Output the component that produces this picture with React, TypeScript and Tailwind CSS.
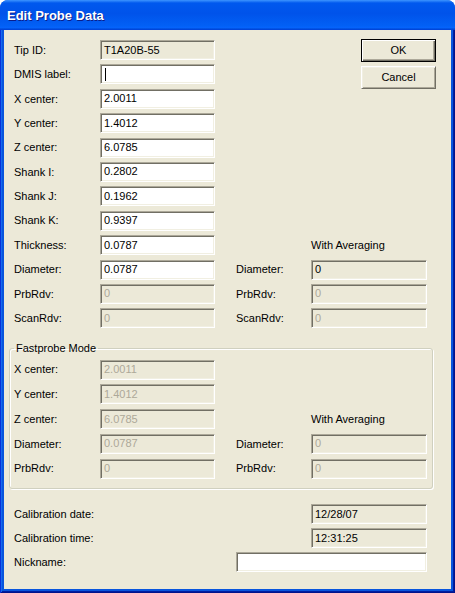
import React from "react";

type Variant = "edit" | "ro" | "dis";

const fieldBase =
  "h-[20px] flex items-center pl-[3px] text-[11px] leading-none border border-t-[#ACA899] border-l-[#ACA899] border-b-white border-r-white shadow-[inset_1px_1px_0_#716F64,inset_-1px_-1px_0_#F1EFE2] whitespace-nowrap overflow-hidden";

function Field({
  value = "",
  variant,
  className = "w-[115px]",
  cursor = false,
}: {
  value?: string;
  variant: Variant;
  className?: string;
  cursor?: boolean;
}) {
  const v =
    variant === "edit"
      ? "bg-white text-black"
      : variant === "ro"
      ? "bg-[#ECE9D8] text-black"
      : "bg-[#ECE9D8] text-[#ACA899]";
  return (
    <div className={`${fieldBase} ${v} ${className}`}>
      {cursor ? <span className="block w-px h-[13px] bg-black ml-[1px]" /> : value}
    </div>
  );
}

function Label({ text, className = "w-[86px]" }: { text: string; className?: string }) {
  return (
    <div className={`h-[20px] flex items-center text-[11px] text-black whitespace-nowrap ${className}`}>
      {text}
    </div>
  );
}

function Button({ text, isDefault = false, className = "" }: { text: string; isDefault?: boolean; className?: string }) {
  const border = isDefault
    ? "border border-black shadow-[inset_1px_1px_0_#FFFFFF,inset_-1px_-1px_0_#716F64,inset_-2px_-2px_0_#ACA899]"
    : "border border-t-white border-l-white border-b-[#716F64] border-r-[#716F64] shadow-[inset_1px_1px_0_#F1EFE2,inset_-1px_-1px_0_#ACA899]";
  return (
    <div
      className={`w-[75px] h-[23px] flex items-center justify-center bg-[#ECE9D8] text-[11px] text-black ${border} ${className}`}
    >
      {text}
    </div>
  );
}

export default function App() {
  return (
    <div className="w-[455px] h-[593px] flex flex-col rounded-t-[8px] overflow-hidden font-['Liberation_Sans',Arial,sans-serif] bg-[#0855DD]">
      {/* Title bar */}
      <div className="h-[30px] shrink-0 flex items-center pl-[7px] pt-[1px] bg-[linear-gradient(180deg,#3d95ff,#0058ee_10%,#0053ea_45%,#0260f5_85%,#0563fb_92%,#0050e0_96%,#003dd7)]">
        <span className="text-white font-bold text-[13px] [text-shadow:1px_1px_0_#0a1e8a]">Edit Probe Data</span>
      </div>
      {/* Frame + body */}
      <div className="flex-1 flex px-[4px] pb-[4px] bg-[#0855DD] shadow-[inset_1px_0_0_#0831D9,inset_-1px_0_0_#00138C,inset_0_-1px_0_#00138C,inset_2px_0_0_#166AEE,inset_-2px_0_0_#001EA0,inset_0_-2px_0_#001EA0]">
        <div className="flex-1 bg-[#ECE9D8] pl-[10px] pt-[10px] flex flex-col">
          {/* Top rows */}
          <div className="flex flex-col">
            <div className="flex h-[24.4px]">
              <Label text="Tip ID:" />
              <Field variant="ro" value="T1A20B-55" />
              <Button text="OK" isDefault className="ml-[146px] -mt-[1px]" />
            </div>
            <div className="flex h-[24.4px]">
              <Label text="DMIS label:" />
              <Field variant="edit" cursor />
              <Button text="Cancel" className="ml-[146px] mt-[1.6px]" />
            </div>
            <div className="flex h-[24.4px]">
              <Label text="X center:" />
              <Field variant="edit" value="2.0011" />
            </div>
            <div className="flex h-[24.4px]">
              <Label text="Y center:" />
              <Field variant="edit" value="1.4012" />
            </div>
            <div className="flex h-[24.4px]">
              <Label text="Z center:" />
              <Field variant="edit" value="6.0785" />
            </div>
            <div className="flex h-[24.4px]">
              <Label text="Shank I:" />
              <Field variant="edit" value="0.2802" />
            </div>
            <div className="flex h-[24.4px]">
              <Label text="Shank J:" />
              <Field variant="edit" value="0.1962" />
            </div>
            <div className="flex h-[24.4px]">
              <Label text="Shank K:" />
              <Field variant="edit" value="0.9397" />
            </div>
            <div className="flex h-[24.4px]">
              <Label text="Thickness:" />
              <Field variant="edit" value="0.0787" />
              <Label text="With Averaging" className="ml-[96px]" />
            </div>
            <div className="flex h-[24.4px]">
              <Label text="Diameter:" />
              <Field variant="edit" value="0.0787" />
              <Label text="Diameter:" className="ml-[21px] w-[75px]" />
              <Field variant="ro" value="0" className="w-[116px]" />
            </div>
            <div className="flex h-[24.4px]">
              <Label text="PrbRdv:" />
              <Field variant="dis" value="0" />
              <Label text="PrbRdv:" className="ml-[21px] w-[75px]" />
              <Field variant="dis" value="0" className="w-[116px]" />
            </div>
            <div className="flex h-[24.4px]">
              <Label text="ScanRdv:" />
              <Field variant="dis" value="0" />
              <Label text="ScanRdv:" className="ml-[21px] w-[75px]" />
              <Field variant="dis" value="0" className="w-[116px]" />
            </div>
          </div>

          {/* Fastprobe group */}
          <fieldset className="mt-[9px] -ml-[5px] w-[424px] border border-[#D0D0BF] rounded-[3px] pl-[4px] pb-[5px] shadow-[1px_1px_0_#FFFFFF,inset_1px_1px_0_#FFFFFF]">
            <legend className="px-[2px] text-[11px] leading-[13px] text-black">Fastprobe Mode</legend>
            <div className="flex flex-col pt-[5px]">
              <div className="flex h-[24.75px]">
                <Label text="X center:" />
                <Field variant="dis" value="2.0011" />
              </div>
              <div className="flex h-[24.75px]">
                <Label text="Y center:" />
                <Field variant="dis" value="1.4012" />
              </div>
              <div className="flex h-[24.75px]">
                <Label text="Z center:" />
                <Field variant="dis" value="6.0785" />
                <Label text="With Averaging" className="ml-[96px]" />
              </div>
              <div className="flex h-[24.75px]">
                <Label text="Diameter:" />
                <Field variant="dis" value="0.0787" />
                <Label text="Diameter:" className="ml-[21px] w-[75px]" />
                <Field variant="dis" value="0" className="w-[116px]" />
              </div>
              <div className="flex h-[24.75px]">
                <Label text="PrbRdv:" />
                <Field variant="dis" value="0" />
                <Label text="PrbRdv:" className="ml-[21px] w-[75px]" />
                <Field variant="dis" value="0" className="w-[116px]" />
              </div>
            </div>
          </fieldset>

          {/* Bottom rows */}
          <div className="flex flex-col mt-[15px]">
            <div className="flex h-[24px]">
              <Label text="Calibration date:" className="w-[297px]" />
              <Field variant="ro" value="12/28/07" className="w-[116px]" />
            </div>
            <div className="flex h-[24px]">
              <Label text="Calibration time:" className="w-[297px]" />
              <Field variant="ro" value="12:31:25" className="w-[116px]" />
            </div>
            <div className="flex h-[24px]">
              <Label text="Nickname:" className="w-[222px]" />
              <Field variant="edit" value="" className="w-[191px]" />
            </div>
          </div>
        </div>
      </div>
    </div>
  );
}
